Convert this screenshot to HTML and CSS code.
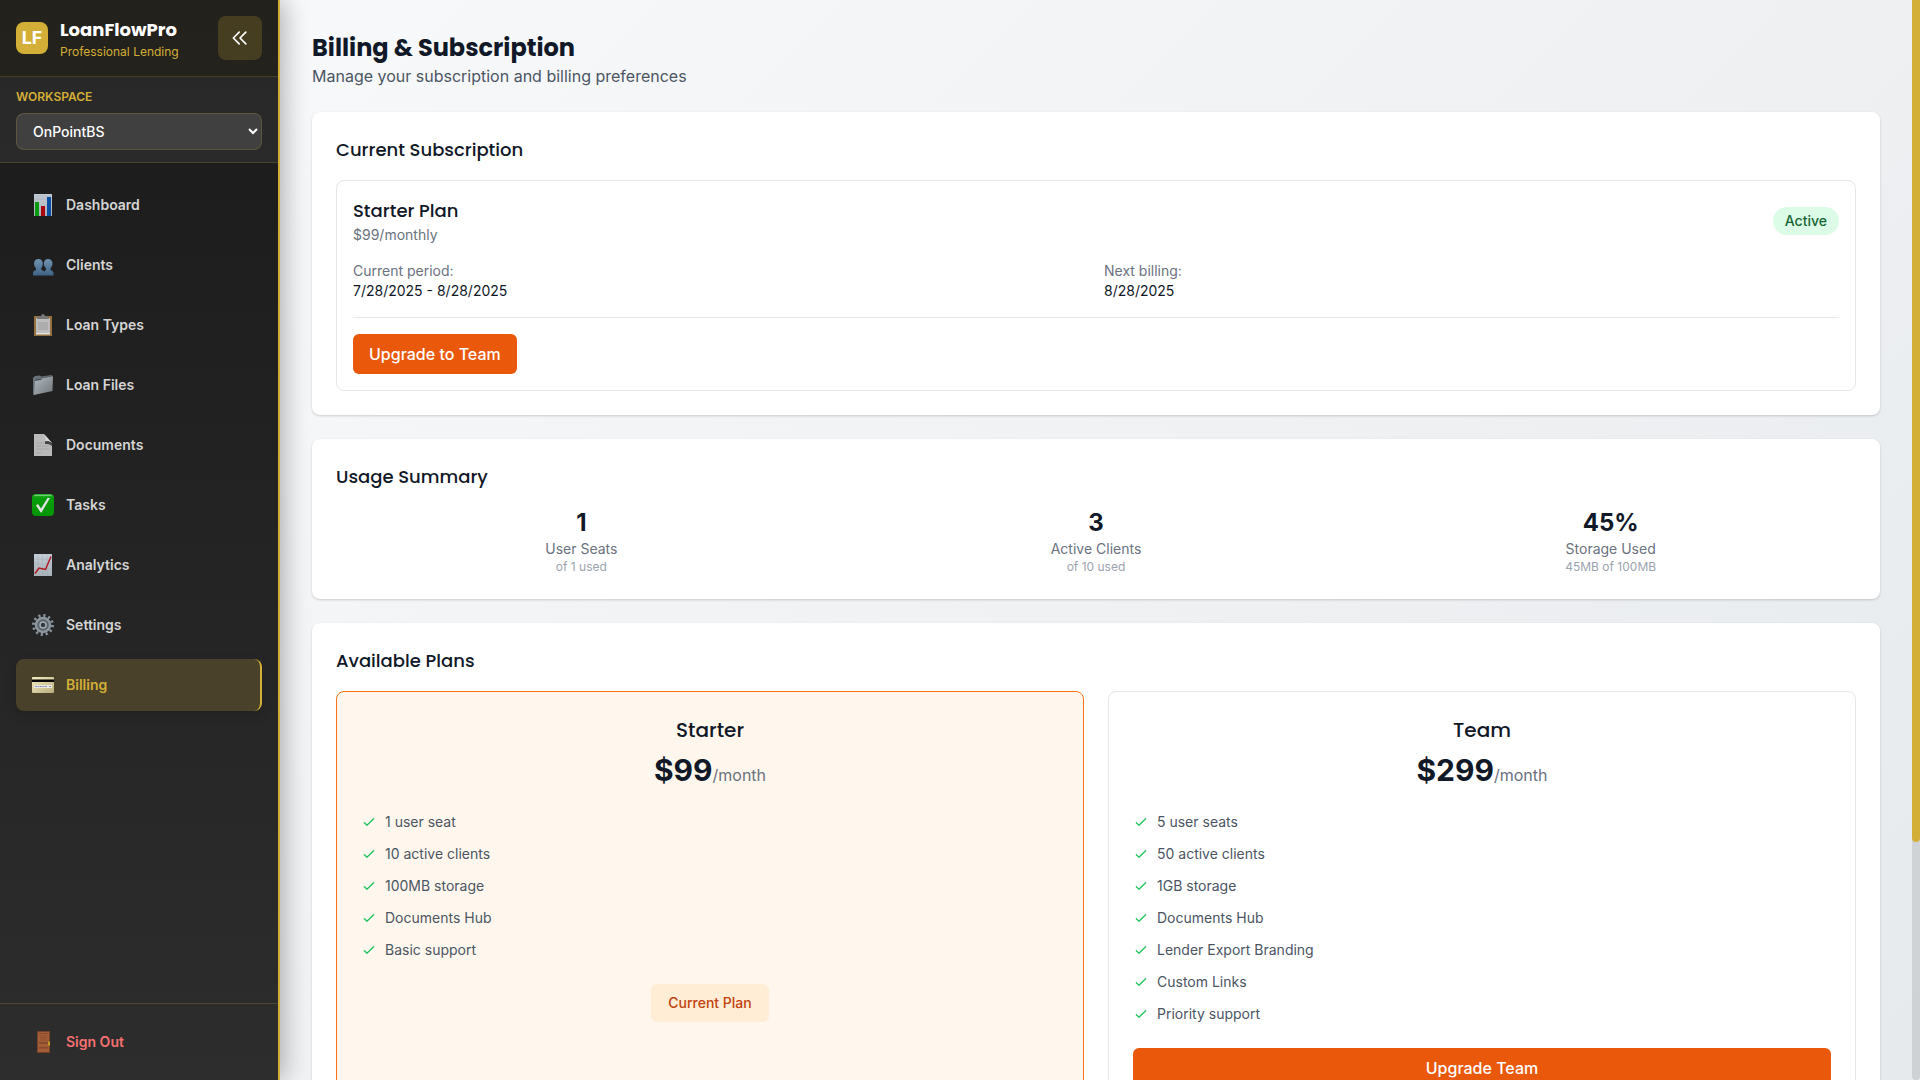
FILE: index.html
```html
<!DOCTYPE html>
<html lang="en">
<head>
<meta charset="utf-8">
<meta name="viewport" content="width=device-width, initial-scale=1">
<title>Billing &amp; Subscription - LoanFlowPro</title>
<link rel="stylesheet" href="styles.css">
</head>
<body>
<svg class="defs" aria-hidden="true">
  <defs>
    <linearGradient id="paper" x1="0" y1="0" x2="0" y2="1"><stop offset="0" stop-color="#c3ccd6"/><stop offset="1" stop-color="#a9b1b8"/></linearGradient>
    <linearGradient id="steel" x1="0" y1="0" x2="1" y2="1"><stop offset="0" stop-color="#b3babf"/><stop offset="1" stop-color="#70777c"/></linearGradient>
    <linearGradient id="blue" x1="0" y1="0" x2="0" y2="1"><stop offset="0" stop-color="#6f93b0"/><stop offset="1" stop-color="#3f6384"/></linearGradient>
    <linearGradient id="green" x1="0" y1="0" x2="0" y2="1"><stop offset="0" stop-color="#2fb52f"/><stop offset=".2" stop-color="#079c0b"/><stop offset="1" stop-color="#069506"/></linearGradient>
    <linearGradient id="card" x1="0" y1="0" x2="1" y2="1"><stop offset="0" stop-color="#f3ecc0"/><stop offset="1" stop-color="#b9ad7c"/></linearGradient>
    <symbol id="check" viewBox="0 0 24 24"><path d="M5 13l4 4L19 7" fill="none" stroke="currentColor" stroke-width="2" stroke-linecap="round" stroke-linejoin="round"/></symbol>
  </defs>
</svg>
<div class="app">
  <aside class="sidebar">
    <header class="brand">
      <div class="logo">LF</div>
      <div class="brand-text">
        <div class="brand-name">LoanFlowPro</div>
        <div class="brand-tag">Professional Lending</div>
      </div>
      <button class="collapse" type="button" aria-label="Collapse sidebar">
        <svg viewBox="0 0 24 24" width="20" height="20"><path d="M11 19l-7-7 7-7m8 14l-7-7 7-7" fill="none" stroke="#fff" stroke-width="2" stroke-linecap="round" stroke-linejoin="round"/></svg>
      </button>
    </header>
    <div class="workspace">
      <label for="workspace">WORKSPACE</label>
      <div class="select-wrap">
        <select id="workspace"><option>OnPointBS</option></select>
        <svg class="chevron" viewBox="0 0 10 7" width="10" height="7"><path d="M1 1l4 4 4-4" fill="none" stroke="#fff" stroke-width="2"/></svg>
      </div>
    </div>
    <nav class="nav">
      <a class="nav-item" href="#">
        <svg class="icon" viewBox="0 0 22 22"><path fill="url(#paper)" d="M2 0h18v22H2z"/><path d="M3 2h16M3 5h16" stroke="#98a2ac" stroke-width=".5"/><path fill="#0a9a10" d="M3 8h4v14H3z"/><path fill="#a80710" d="M9 12h4v10H9z"/><path fill="#084fa4" d="M15 3h4v19h-4z"/></svg>
        Dashboard</a>
      <a class="nav-item" href="#">
        <svg class="icon" viewBox="0 0 22 22"><g fill="url(#blue)"><path d="M6.500 5c2.800 0 4.500 2 4.300 5-.1 2-.8 3.300-1.600 4.200v1.300c.8 1 3.300 1 3.300 3.500v2.500H1V19c0-2 2-2.300 3-3.300v-1.500C2.800 13 2 11.500 2 9.500 2 7 3.700 5 6.500 5z"/><path d="M16 5c2.800 0 4.500 2 4.500 4.500 0 2-.8 3.500-2 4.700v1.500c1 1 3 1.300 3 3.300v2.500H12V19c0-2.300 1.500-2.300 2-3.500v-1.300c-1.300-1-2.200-2.700-2.200-4.700C11.800 7 13.500 5 16 5z"/></g></svg>
        Clients</a>
      <a class="nav-item" href="#">
        <svg class="icon" viewBox="0 0 22 22"><path fill="#94703e" d="M2 2h18v20H2z"/><path fill="#bdbdbd" d="M4 4h14v16H4z"/><path fill="#e3e3e3" d="M4 19h14v1.500H4z"/><path fill="#adadad" d="M6 8h10v8H6z"/><path fill="#777" d="M5 5c0-2 2-3 4-3 .3-1.300 1-2 2-2s1.700.7 2 2c2 0 4 1 4 3z"/></svg>
        Loan Types</a>
      <a class="nav-item" href="#">
        <svg class="icon" viewBox="0 0 22 22"><path fill="#66717a" d="M1 4l2-2 5-.5 1 1L20 1v2L3 6v14l-2 1z"/><path fill="url(#steel)" d="M3 6.500l6-1 1-1.500 11-2-.5 15L2 21z"/><path fill="none" stroke="#40484f" stroke-width=".6" d="M3 6.500l6-1 1-1.500 10.800-2"/></svg>
        Loan Files</a>
      <a class="nav-item" href="#">
        <svg class="icon" viewBox="0 0 22 22"><path fill="#b9b9b9" d="M2 0h10l8 9v13H2z"/><path fill="#444" d="M13 5l7 4v3c-2-1.800-4-2-7-2z"/><path fill="#d5d5d5" d="M12 0c1.500 2 1.500 5 1 7.500 2-.8 5-.5 7 1.500z"/><path d="M4 9h8M4 12h13M4 15h13M4 19h5" stroke="#9d9d9d" stroke-width=".7"/></svg>
        Documents</a>
      <a class="nav-item" href="#">
        <svg class="icon" viewBox="0 0 22 22"><rect width="22" height="22" rx="4" fill="url(#green)"/><path d="M3 1.500h16" stroke="#72cb72" stroke-width="1" stroke-linecap="round"/><path fill="#e3e3e3" d="M4 11.500l2-1.500 3 4.500L15.500 4H18L9.500 18.500H8.700z"/></svg>
        Tasks</a>
      <a class="nav-item" href="#">
        <svg class="icon" viewBox="0 0 22 22"><path fill="url(#paper)" d="M2 0h18v22H2z"/><path d="M6 0v22M10.500 0v22M15 0v22M2 5h18M2 10h18M2 15h18" stroke="#9ca8b2" stroke-width=".4"/><path fill="none" stroke="#b01922" stroke-width="1.500" d="M3 19.500L7 14l6.500 1.500L19 2.500"/></svg>
        Analytics</a>
      <a class="nav-item" href="#">
        <svg class="icon" viewBox="0 0 22 22"><circle cx="11" cy="11" r="9.500" fill="none" stroke="#87919a" stroke-width="3" stroke-dasharray="2.200 2.774"/><circle cx="11" cy="11" r="7" fill="#5a626a" stroke="#8c969f" stroke-width="2.500"/><circle cx="11" cy="11" r="3" fill="#343a40" stroke="#a3adb5" stroke-width="1.500"/></svg>
        Settings</a>
      <a class="nav-item active" href="#" aria-current="page">
        <svg class="icon" viewBox="0 0 22 22"><rect y="3" width="22" height="16" rx="1" fill="url(#card)"/><path fill="#050505" d="M0 5.500h22v2.500H0z"/><path fill="#e9e9df" d="M2 11h18v3H2z"/><path d="M3 12.500h12m2 0h2" stroke="#8795b1" stroke-width="1" stroke-dasharray="2 .5"/></svg>
        Billing</a>
    </nav>
    <footer class="signout">
      <button class="nav-item signout-button" type="button">
        <svg class="icon" viewBox="0 0 22 22"><path fill="#754127" d="M5 0h13v22H5z"/><path fill="#a45d37" d="M6 1h11v20H6z"/><path fill="#864a2c" d="M7 2h9v1H7zm0 9h9v2H7zm0 5h9v1.500H7z"/><path fill="#9a5632" d="M8 4h7v6H8z"/><path fill="#c49a24" d="M16 10.500h2v4h-2z"/></svg>
        Sign Out</button>
    </footer>
  </aside>

  <main class="main">
    <header class="page-head">
      <h1>Billing &amp; Subscription</h1>
      <p>Manage your subscription and billing preferences</p>
    </header>

    <section class="panel">
      <h2>Current Subscription</h2>
      <div class="subscription">
        <div class="sub-head">
          <div>
            <h3>Starter Plan</h3>
            <p class="muted">$99/monthly</p>
          </div>
          <span class="badge">Active</span>
        </div>
        <dl class="sub-details">
          <div><dt>Current period:</dt><dd>7/28/2025 - 8/28/2025</dd></div>
          <div><dt>Next billing:</dt><dd>8/28/2025</dd></div>
        </dl>
        <div class="sub-actions"><button class="button" type="button">Upgrade to Team</button></div>
      </div>
    </section>

    <section class="panel">
      <h2>Usage Summary</h2>
      <div class="usage">
        <div><p class="stat">1</p><p class="muted">User Seats</p><p class="hint">of 1 used</p></div>
        <div><p class="stat">3</p><p class="muted">Active Clients</p><p class="hint">of 10 used</p></div>
        <div><p class="stat">45%</p><p class="muted">Storage Used</p><p class="hint">45MB of 100MB</p></div>
      </div>
    </section>

    <section class="panel">
      <h2>Available Plans</h2>
      <div class="plans">
        <article class="plan current">
          <h3>Starter</h3>
          <p class="price"><strong>$99</strong>/month</p>
          <ul>
            <li><svg><use href="#check"/></svg>1 user seat</li>
            <li><svg><use href="#check"/></svg>10 active clients</li>
            <li><svg><use href="#check"/></svg>100MB storage</li>
            <li><svg><use href="#check"/></svg>Documents Hub</li>
            <li><svg><use href="#check"/></svg>Basic support</li>
          </ul>
          <span class="current-tag">Current Plan</span>
        </article>
        <article class="plan">
          <h3>Team</h3>
          <p class="price"><strong>$299</strong>/month</p>
          <ul>
            <li><svg><use href="#check"/></svg>5 user seats</li>
            <li><svg><use href="#check"/></svg>50 active clients</li>
            <li><svg><use href="#check"/></svg>1GB storage</li>
            <li><svg><use href="#check"/></svg>Documents Hub</li>
            <li><svg><use href="#check"/></svg>Lender Export Branding</li>
            <li><svg><use href="#check"/></svg>Custom Links</li>
            <li><svg><use href="#check"/></svg>Priority support</li>
          </ul>
          <button class="button wide" type="button">Upgrade Team</button>
        </article>
      </div>
    </section>
  </main>
  <div class="scrollbar" aria-hidden="true"><div class="thumb"></div></div>
</div>
</body>
</html>
```
FILE: styles.css
```css
*, *::before, *::after { box-sizing: border-box; }
body, h1, h2, h3, p, ul, dl, dd { margin: 0; padding: 0; }
:root { --gold: #d4af37; --ink: #111827; --line: #e5e7eb; }
body { font: 14px/20px Inter, "Liberation Sans", sans-serif; color: var(--ink); }
h1, h2, h3, .brand-name { font-family: Poppins, Inter, sans-serif; }
button, select { font: inherit; }
.defs { position: absolute; width: 0; height: 0; }

.app {
  display: flex;
  height: 100vh;
  overflow: hidden;
  background: linear-gradient(135deg, #f9fafc 0%, #f1f2f4 50%, #e6eaed 100%);
}

/* Sidebar */
.sidebar {
  display: flex;
  flex-direction: column;
  flex: none;
  width: 280px;
  border-right: 2px solid var(--gold);
  background: linear-gradient(180deg, #1a1a1a 0%, #2d2d2d 100%);
  box-shadow: 4px 0 24px rgba(0, 0, 0, .3);
}
.brand {
  display: flex;
  align-items: center;
  gap: 12px;
  padding: 16px;
  border-bottom: 1px solid rgba(212, 175, 55, .2);
  background: rgba(212, 175, 55, .05);
}
.logo {
  width: 32px;
  height: 32px;
  border-radius: 8px;
  background: var(--gold);
  color: #fff;
  font-size: 18px;
  font-weight: 700;
  line-height: 32px;
  text-align: center;
}
.brand-text { flex: 1; }
.brand-name { color: #fff; font-size: 18px; line-height: 28px; font-weight: 700; }
.brand-tag { color: var(--gold); font-size: 12px; line-height: 16px; }
.collapse {
  display: grid;
  place-items: center;
  width: 44px;
  height: 44px;
  border: 0;
  border-radius: 8px;
  background: rgba(212, 175, 55, .2);
}
.workspace {
  padding: 12px 16px;
  border-bottom: 1px solid rgba(212, 175, 55, .2);
  background: rgba(255, 255, 255, .06);
}
.workspace label {
  display: block;
  margin-bottom: 8px;
  color: var(--gold);
  font-size: 12px;
  line-height: 16px;
  font-weight: 600;
}
.select-wrap { position: relative; }
.workspace select {
  display: block;
  width: 100%;
  height: 37px;
  padding: 0 16px;
  border: 1px solid rgba(212, 175, 55, .2);
  border-radius: 8px;
  appearance: none;
  background: #404040;
  color: #fff;
  font-weight: 500;
}
.chevron { position: absolute; right: 4px; top: 15px; pointer-events: none; }
.nav { display: flex; flex-direction: column; flex: 1; gap: 8px; padding: 16px; }
.nav-item {
  display: flex;
  align-items: center;
  gap: 12px;
  width: 100%;
  height: 52px;
  padding: 0 16px;
  border: 0;
  border-radius: 8px;
  background: none;
  color: #d5d5d5;
  font-weight: 600;
  text-decoration: none;
}
.icon { flex: none; width: 22px; height: 22px; }
.nav-item.active {
  border-right: 2px solid var(--gold);
  background: #4a412a;
  color: var(--gold);
  box-shadow: 0 4px 12px rgba(0, 0, 0, .15);
}
.signout { padding: 12px 16px; border-top: 1px solid rgba(212, 175, 55, .2); }
.signout-button { color: #f87171; }

/* Page */
.main {
  flex: 1;
  min-width: 0;
  padding: 32px;
  overflow-y: auto;
  scrollbar-width: none;
}
.page-head { margin-bottom: 24px; }
.page-head h1 { font-size: 24px; line-height: 32px; font-weight: 700; }
.page-head p { color: #4b5563; font-size: 16px; line-height: 24px; }
.panel {
  margin-bottom: 24px;
  padding: 24px;
  border-radius: 8px;
  background: #fff;
  box-shadow: 0 1px 3px rgba(0, 0, 0, .1), 0 1px 2px rgba(0, 0, 0, .08);
}
h2 { margin-bottom: 16px; font-size: 18px; line-height: 28px; font-weight: 500; }
h3 { font-size: 18px; line-height: 28px; font-weight: 500; }
.muted { color: #6b7280; }
.hint { color: #9ca3af; font-size: 12px; line-height: 16px; }

.subscription { padding: 16px; border: 1px solid var(--line); border-radius: 8px; }
.sub-head { display: flex; align-items: center; justify-content: space-between; margin-bottom: 16px; }
.badge {
  padding: 4px 12px;
  border-radius: 14px;
  background: #dcfce7;
  color: #166534;
  font-weight: 500;
}
.sub-details { display: grid; grid-template-columns: 1fr 1fr; gap: 16px; margin-bottom: 16px; }
.sub-details dt { color: #6b7280; }
.sub-actions { padding-top: 16px; border-top: 1px solid var(--line); }
.button {
  display: block;
  padding: 8px 16px;
  border: 0;
  border-radius: 6px;
  background: #ea580c;
  color: #fff;
  font-size: 16px;
  line-height: 24px;
  font-weight: 500;
}
.wide { width: 100%; }

.usage { display: grid; grid-template-columns: repeat(3, 1fr); gap: 24px; text-align: center; }
.stat { font-size: 24px; line-height: 32px; font-weight: 700; }

.plans { display: grid; grid-template-columns: 1fr 1fr; gap: 24px; }
.plan {
  display: flex;
  flex-direction: column;
  padding: 24px;
  border: 1px solid var(--line);
  border-radius: 8px;
}
.plan.current { border-color: #f97316; background: #fff7ed; }
.plan h3 { font-size: 20px; text-align: center; }
.price { margin: 8px 0 24px; color: #6b7280; font-size: 16px; line-height: 24px; text-align: center; }
.price strong { color: var(--ink); font-size: 30px; line-height: 36px; font-weight: 700; }
.plan ul { display: grid; gap: 12px; margin-bottom: 24px; list-style: none; }
.plan li { display: flex; align-items: center; gap: 8px; color: #4b5563; }
.plan li svg { width: 16px; height: 16px; color: #22c55e; }
.current-tag {
  align-self: center;
  padding: 8px 16px;
  border: 1px solid transparent;
  border-radius: 6px;
  background: #ffedd5;
  color: #c2410c;
  font-weight: 500;
}

.scrollbar { flex: none; width: 8px; border-radius: 4px; background: rgba(0, 0, 0, .1); }
.thumb { height: 78%; border-radius: 0 0 4px 4px; background: var(--gold); }
```
